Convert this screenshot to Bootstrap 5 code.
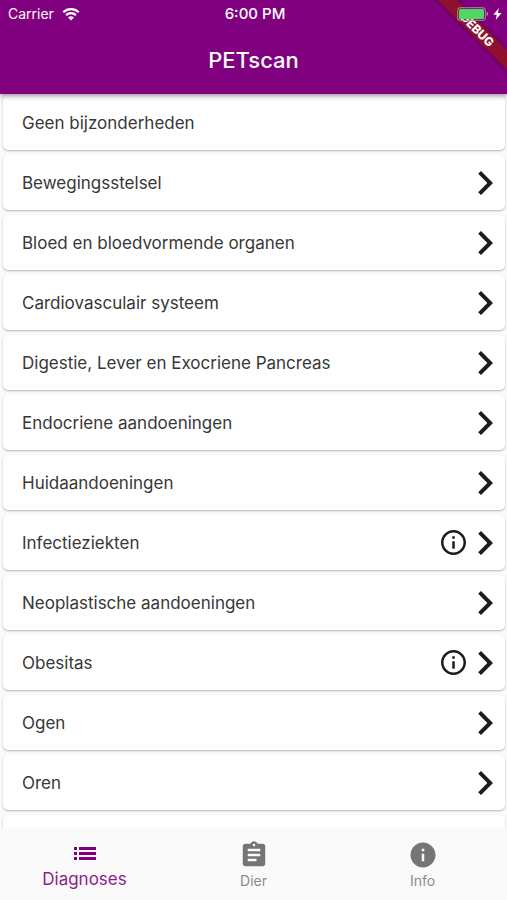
<!DOCTYPE html>
<html lang="nl">
<head>
<meta charset="utf-8">
<meta name="viewport" content="width=device-width, initial-scale=1">
<title>PETscan</title>
<link href="https://cdn.jsdelivr.net/npm/bootstrap@5.3.0/dist/css/bootstrap.min.css" rel="stylesheet">
<style>
  body { font-family: Inter, "Liberation Sans", sans-serif; background: #fafafa; color: #373737; }
  svg { display: block; flex: none; }
  .top-area { background: #80007f; box-shadow: 0 2px 5px rgba(0, 0, 0, .4); z-index: 2; }
  .status-bar { height: 28px; font-size: 14px; line-height: 28px; padding: 0 5px 0 8px; }
  .status-bar .clock { font-size: 15px; font-weight: 500; }
  .status-bar .side { flex: 1 1 0; }
  .app-title { font-size: 22px; line-height: 64px; height: 66px; font-weight: 500; margin: 0; }
  .debug-corner { position: absolute; top: 0; right: 0; width: 80px; height: 80px; overflow: hidden; }
  .debug-corner span { position: absolute; top: 23px; right: -30px; width: 120px; height: 14px; line-height: 14px;
    transform: rotate(45deg); background: #8f102d; box-shadow: 0 0 5px rgba(0, 0, 0, .4);
    font-size: 12px; font-weight: 800; text-align: center; color: #fff; }
  .diagnosis-list { padding: 1px 2px 0 3px; gap: 5px; scrollbar-width: none; min-height: 0; }
  .diagnosis { flex: none; height: 55px; border: 0; border-radius: 5px; background: #fff; color: inherit;
    padding: 0 12px 0 19px; font-size: 17px; line-height: 24px; text-align: left;
    box-shadow: 0 1px 2px rgba(0, 0, 0, .28); }
  .diagnosis svg { fill: #1c1c1c; }
  .diagnosis .info-icon { margin-right: 12px; }
  .tab-bar { height: 72px; background: #fafafa; z-index: 1; }
  .tab { color: #757575; font-size: 14px; line-height: 20px; padding-top: 12px; }
  .tab svg { fill: currentColor; }
  .tab-label { margin-top: 1px; color: #8c8c8c; }
  .tab.active { color: #80007f; font-size: 17px; }
  .tab.active .tab-label { color: #8f1b90; }
</style>
<script src="https://cdn.jsdelivr.net/npm/bootstrap@5.3.0/dist/js/bootstrap.bundle.min.js"></script>
</head>
<body class="vh-100 d-flex flex-column overflow-hidden">
<svg width="0" height="0" class="position-absolute" aria-hidden="true">
  <symbol id="chevron" viewBox="8.5 6 7.5 12"><path d="M10 6 8.59 7.41 13.17 12l-4.58 4.59L10 18l6-6z"/></symbol>
  <symbol id="info-outline" viewBox="2 2 20 20"><path d="M11 7h2v2h-2zm0 4h2v6h-2zm1-9C6.48 2 2 6.48 2 12s4.48 10 10 10 10-4.48 10-10S17.52 2 12 2zm0 18c-4.41 0-8-3.59-8-8s3.59-8 8-8 8 3.59 8 8-3.59 8-8 8z"/></symbol>
</svg>

<header class="top-area position-relative text-white">
  <div class="debug-corner"><span>DEBUG</span></div>
  <div class="status-bar d-flex align-items-center position-relative">
    <div class="side d-flex align-items-center gap-2">
      <span>Carrier</span>
      <svg width="18" height="15" viewBox="0 0 18 15" fill="none" stroke="#fff" stroke-width="2.300" aria-label="Wi-Fi">
        <path d="M1.300 5.200c4.300-4.200 11.100-4.200 15.400 0"/><path d="M4.100 8.200c2.800-2.700 7-2.700 9.800 0"/><path d="M9 13.400 6 10.400c1.700-1.500 4.300-1.500 6 0z" fill="#fff" stroke="none"/>
      </svg>
    </div>
    <span class="clock">6:00 PM</span>
    <div class="side d-flex align-items-center justify-content-end gap-1">
      <svg width="32" height="14" viewBox="0 0 32 14" aria-label="Batterij">
        <rect x=".6" y=".6" width="27.800" height="12.800" rx="3.500" fill="none" stroke="#b583a6" stroke-opacity=".8" stroke-width="1.200"/>
        <rect x="2" y="2" width="25" height="10" rx="1.500" fill="#4cd964"/>
        <path d="M29.600 4.800q1.700.6 1.700 2.200t-1.700 2.200z" fill="#b583b5"/>
      </svg>
      <svg width="9" height="12" viewBox="0 0 9 12" fill="#fff" aria-label="Laadt op"><path d="M5.800 0 .4 6.800h3.300L2.700 12l5.800-7H5z"/></svg>
    </div>
  </div>
  <h1 class="app-title text-center">PETscan</h1>
</header>

<main class="diagnosis-list flex-fill d-flex flex-column overflow-auto">
  <button type="button" class="diagnosis d-flex align-items-center"><span class="flex-fill">Geen bijzonderheden</span></button>
  <button type="button" class="diagnosis d-flex align-items-center"><span class="flex-fill">Bewegingsstelsel</span><svg width="15" height="24"><use href="#chevron"/></svg></button>
  <button type="button" class="diagnosis d-flex align-items-center"><span class="flex-fill">Bloed en bloedvormende organen</span><svg width="15" height="24"><use href="#chevron"/></svg></button>
  <button type="button" class="diagnosis d-flex align-items-center"><span class="flex-fill">Cardiovasculair systeem</span><svg width="15" height="24"><use href="#chevron"/></svg></button>
  <button type="button" class="diagnosis d-flex align-items-center"><span class="flex-fill">Digestie, Lever en Exocriene Pancreas</span><svg width="15" height="24"><use href="#chevron"/></svg></button>
  <button type="button" class="diagnosis d-flex align-items-center"><span class="flex-fill">Endocriene aandoeningen</span><svg width="15" height="24"><use href="#chevron"/></svg></button>
  <button type="button" class="diagnosis d-flex align-items-center"><span class="flex-fill">Huidaandoeningen</span><svg width="15" height="24"><use href="#chevron"/></svg></button>
  <button type="button" class="diagnosis d-flex align-items-center"><span class="flex-fill">Infectieziekten</span><svg class="info-icon" width="25" height="25"><use href="#info-outline"/></svg><svg width="15" height="24"><use href="#chevron"/></svg></button>
  <button type="button" class="diagnosis d-flex align-items-center"><span class="flex-fill">Neoplastische aandoeningen</span><svg width="15" height="24"><use href="#chevron"/></svg></button>
  <button type="button" class="diagnosis d-flex align-items-center"><span class="flex-fill">Obesitas</span><svg class="info-icon" width="25" height="25"><use href="#info-outline"/></svg><svg width="15" height="24"><use href="#chevron"/></svg></button>
  <button type="button" class="diagnosis d-flex align-items-center"><span class="flex-fill">Ogen</span><svg width="15" height="24"><use href="#chevron"/></svg></button>
  <button type="button" class="diagnosis d-flex align-items-center"><span class="flex-fill">Oren</span><svg width="15" height="24"><use href="#chevron"/></svg></button>
  <div class="diagnosis"></div>
</main>

<nav class="tab-bar d-flex flex-shrink-0">
  <a href="#" class="tab active col-4 d-flex flex-column align-items-center text-decoration-none" aria-current="page">
    <svg width="28" height="28" viewBox="0 0 28 28"><path d="M3 7h3v3H3zm5 0h17v3H8zM3 12h3v3H3zm5 0h17v3H8zM3 17h3v3H3zm5 0h17v3H8z"/></svg>
    <span class="tab-label">Diagnoses</span>
  </a>
  <a href="#" class="tab col-4 d-flex flex-column align-items-center text-decoration-none">
    <svg width="30" height="30" viewBox="0 0 24 24"><path d="M19 3h-4.180C14.400 1.840 13.300 1 12 1c-1.300 0-2.400.84-2.820 2H5c-1.100 0-2 .9-2 2v14c0 1.100.9 2 2 2h14c1.100 0 2-.9 2-2V5c0-1.100-.9-2-2-2zm-7 0c.55 0 1 .45 1 1s-.45 1-1 1-1-.45-1-1 .45-1 1-1zm2 14H7v-2h7v2zm3-4H7v-2h10v2zm0-4H7V7h10v2z"/></svg>
    <span class="tab-label">Dier</span>
  </a>
  <a href="#" class="tab col-4 d-flex flex-column align-items-center text-decoration-none">
    <svg width="30" height="30" viewBox="0 0 24 24"><path d="M12 2C6.480 2 2 6.480 2 12s4.480 10 10 10 10-4.480 10-10S17.520 2 12 2zm1 15h-2v-6h2v6zm0-8h-2V7h2v2z"/></svg>
    <span class="tab-label">Info</span>
  </a>
</nav>
</body>
</html>
